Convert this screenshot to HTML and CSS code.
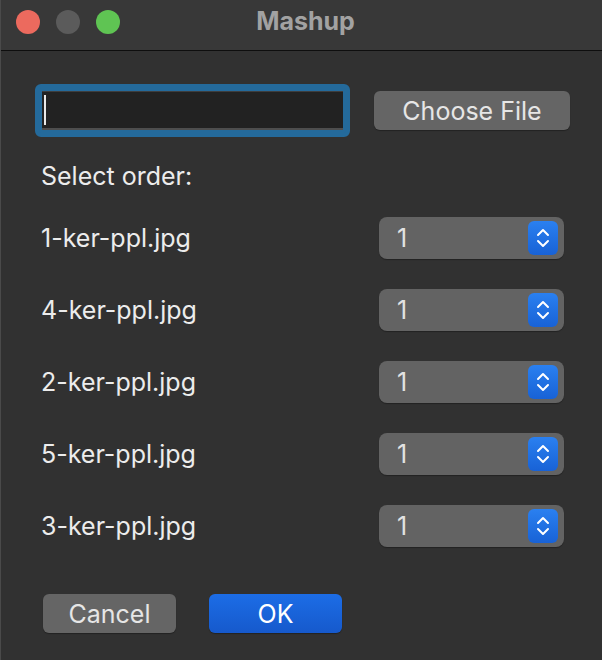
FILE: index.html
```html
<!DOCTYPE html>
<html>
<head>
<meta charset="utf-8">
<link rel="stylesheet" href="styles.css">
</head>
<body>
<div class="window">
  <div class="titlebar">
    <div class="lights">
      <span class="light red"></span>
      <span class="light grey"></span>
      <span class="light green"></span>
    </div>
    <div class="title">Mashup</div>
    <div></div>
  </div>
  <div class="content">
    <div class="file-row">
      <div class="field-ring"><div class="field"><span class="caret"></span></div></div>
      <button class="btn choose">Choose File</button>
    </div>
    <div class="heading">Select order:</div>
    <div class="rows">
      <div class="row"><span class="name">1-ker-ppl.jpg</span><div class="select"><span class="val">1</span><span class="stepper"><svg viewBox="0 0 30 34" width="30" height="34"><path d="M10 14 L15 9 L20 14 M10 20 L15 25 L20 20" fill="none" stroke="#fff" stroke-width="2" stroke-linecap="round" stroke-linejoin="round"/></svg></span></div></div>
      <div class="row"><span class="name">4-ker-ppl.jpg</span><div class="select"><span class="val">1</span><span class="stepper"><svg viewBox="0 0 30 34" width="30" height="34"><path d="M10 14 L15 9 L20 14 M10 20 L15 25 L20 20" fill="none" stroke="#fff" stroke-width="2" stroke-linecap="round" stroke-linejoin="round"/></svg></span></div></div>
      <div class="row"><span class="name">2-ker-ppl.jpg</span><div class="select"><span class="val">1</span><span class="stepper"><svg viewBox="0 0 30 34" width="30" height="34"><path d="M10 14 L15 9 L20 14 M10 20 L15 25 L20 20" fill="none" stroke="#fff" stroke-width="2" stroke-linecap="round" stroke-linejoin="round"/></svg></span></div></div>
      <div class="row"><span class="name">5-ker-ppl.jpg</span><div class="select"><span class="val">1</span><span class="stepper"><svg viewBox="0 0 30 34" width="30" height="34"><path d="M10 14 L15 9 L20 14 M10 20 L15 25 L20 20" fill="none" stroke="#fff" stroke-width="2" stroke-linecap="round" stroke-linejoin="round"/></svg></span></div></div>
      <div class="row"><span class="name">3-ker-ppl.jpg</span><div class="select"><span class="val">1</span><span class="stepper"><svg viewBox="0 0 30 34" width="30" height="34"><path d="M10 14 L15 9 L20 14 M10 20 L15 25 L20 20" fill="none" stroke="#fff" stroke-width="2" stroke-linecap="round" stroke-linejoin="round"/></svg></span></div></div>
    </div>
    <div class="actions">
      <button class="btn cancel">Cancel</button>
      <button class="btn ok">OK</button>
    </div>
  </div>
</div>
</body>
</html>
```

FILE: styles.css
```css
html, body {
  margin: 0;
  padding: 0;
  background: #313131;
}
body {
  font-family: "Inter", "Liberation Sans", sans-serif;
  color: #ececec;
}
.window {
  width: 602px;
  height: 660px;
  background: #313131;
  border-left: 1px solid #4a4a4a;
  box-sizing: border-box;
  display: flex;
  flex-direction: column;
  overflow: hidden;
}
.titlebar {
  height: 50px;
  flex: none;
  background: #383838;
  border-bottom: 1px solid #0e0e0e;
  display: grid;
  grid-template-columns: 1fr auto 1fr;
  align-items: center;
}
.lights {
  display: flex;
  gap: 16px;
  padding-left: 15px;
  margin-top: -6px;
}
.light {
  width: 24px;
  height: 24px;
  border-radius: 50%;
  display: block;
}
.red { background: #ec6a5e; }
.grey { background: #5b5b5b; }
.green { background: #5fc453; }
.title {
  font-size: 25px;
  font-weight: 700;
  color: #a2a2a2;
  margin-top: -8px;
  padding-left: 8px;
  line-height: 30px;
}
.content {
  padding: 33px 0 0 34px;
  display: flex;
  flex-direction: column;
}
.file-row {
  display: flex;
  align-items: center;
}
.field-ring {
  width: 315px;
  height: 53px;
  box-sizing: border-box;
  border: 4px solid #246a9b;
  border-radius: 6px;
  padding: 3px;
  background: #246a9b;
}
.field {
  height: 100%;
  box-sizing: border-box;
  background: #222222;
  border-top: 1px solid #3e3e3e;
  border-bottom: 2px solid #4e4e4e;
  display: flex;
  align-items: center;
  padding-left: 2px;
}
.caret {
  display: block;
  width: 2px;
  height: 30px;
  background: #e8e8e8;
}
.btn {
  font-family: "Inter", "Liberation Sans", sans-serif;
  font-size: 25px;
  color: #e6e6e6;
  border: none;
  border-radius: 6px;
  background: #656565;
  height: 39px;
  padding: 0;
  box-shadow: 0 1px 1px rgba(0,0,0,0.3);
}
.choose {
  width: 196px;
  margin-left: 24px;
}
.heading {
  font-size: 25px;
  margin-top: 24px;
  padding-left: 6px;
  line-height: 30px;
}
.rows {
  display: flex;
  flex-direction: column;
  gap: 30px;
  margin-top: 26px;
}
.row {
  display: flex;
  align-items: center;
  height: 42px;
}
.name {
  font-size: 25px;
  width: 338px;
  padding-left: 6px;
  flex: none;
  box-sizing: content-box;
}
.select {
  width: 185px;
  height: 42px;
  box-sizing: border-box;
  background: #636363;
  border-radius: 8px;
  display: flex;
  align-items: center;
  justify-content: space-between;
  padding: 0 6px 0 18px;
  box-shadow: 0 1px 1px rgba(0,0,0,0.3);
}
.val {
  font-size: 25px;
  color: #e2e2e2;
}
.stepper {
  width: 30px;
  height: 34px;
  border-radius: 6px;
  background: linear-gradient(#2a80f0, #1862d6);
  display: flex;
}
.actions {
  display: flex;
  gap: 33px;
  margin-top: 47px;
  padding-left: 8px;
}
.cancel {
  width: 133px;
}
.ok {
  width: 133px;
  background: linear-gradient(#1c6de6, #1659cc);
  color: #ffffff;
}
```
